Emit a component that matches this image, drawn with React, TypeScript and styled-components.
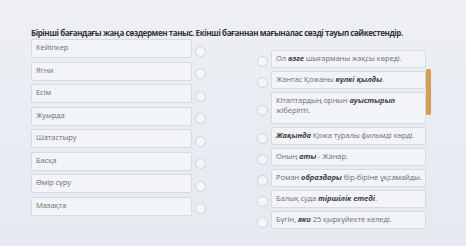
import React from "react";
import styled, { createGlobalStyle } from "styled-components";

const Global = createGlobalStyle`
  html, body { margin: 0; padding: 0; }
  body {
    width: 466px; height: 246px; overflow: hidden;
    background: linear-gradient(180deg, #eef0f5 0%, #e8ebf1 60%, #e6e9ef 100%);
    font-family: "Open Sans", "Noto Sans", sans-serif;
  }
`;

const Page = styled.div`
  position: relative;
  width: 466px;
  height: 246px;
  padding: 28px 0 0 31px;
  box-sizing: border-box;
`;

const Title = styled.div`
  font-size: 8px;
  font-weight: 700;
  color: #33363c;
  letter-spacing: -0.42px;
  line-height: 10px;
  white-space: nowrap;
`;

const Columns = styled.div`
  display: flex;
  align-items: flex-start;
  margin-top: 1px;
`;

const LeftCol = styled.div`
  display: flex;
  flex-direction: column;
  gap: 3.5px;
`;

const RightCol = styled.div`
  display: flex;
  flex-direction: column;
  gap: 3px;
  margin-top: 11px;
  margin-left: 51px;
`;

const Row = styled.div`
  display: flex;
  align-items: center;
  gap: 3px;
`;

const Box = styled.div<{ $w: number; $h?: number }>`
  width: ${(p) => p.$w}px;
  min-height: ${(p) => p.$h ?? 17}px;
  box-sizing: border-box;
  background: #f3f4f7;
  border: 1px solid #d7dae0;
  border-radius: 2px;
  padding: 2px 4px;
  font-size: 7.6px;
  letter-spacing: -0.1px;
  line-height: 10px;
  color: #6d6f74;
  white-space: nowrap;
  display: flex;
  align-items: flex-start;
`;

const Radio = styled.span`
  width: 9px;
  height: 9px;
  border: 1px solid #cfd2d8;
  border-radius: 50%;
  background: #f5f6f8;
  flex: none;
  margin-top: 5px;
`;

const Em = styled.b`
  font-weight: 700;
  font-style: italic;
  color: #3f4147;
`;

const Scroll = styled.div`
  position: absolute;
  left: 426px;
  top: 69px;
  width: 5px;
  height: 46px;
  background: #d39f52;
  border-radius: 2px;
  box-shadow: 0 0 1px #e8c48a;
`;

const left = ["Кейіпкер", "Ягни", "Есім", "Жуырда", "Шатастыру", "Басқа", "Өмір сүру", "Мазақта"];

const right: React.ReactNode[] = [
  <>Ол <Em>өзге</Em> шығарманы жақсы көреді.</>,
  <>Жантас Қожаны <Em>күлкі қылды</Em>.</>,
  <>Кітаптардың орнын <Em>ауыстырып</Em><br />жіберіпті.</>,
  <><Em>Жақында</Em> Қожа туралы фильмді көрді.</>,
  <>Оның <Em>аты</Em> - Жанар.</>,
  <>Роман <Em>образдары</Em> бір-біріне ұқсамайды.</>,
  <>Балық суда <Em>тіршілік етеді</Em>.</>,
  <>Бүгін, <Em>яки</Em> 25 қыркүйекте келеді.</>,
];

export default function App() {
  return (
    <>
      <Global />
      <Page>
        <Title>Бірінші бағандағы жаңа сөздермен таныс. Екінші бағаннан мағыналас сөзді тауып сәйкестендір.</Title>
        <Columns>
          <LeftCol>
            {left.map((t) => (
              <Row key={t}>
                <Box $w={161} $h={19}>{t}</Box>
                <Radio />
              </Row>
            ))}
          </LeftCol>
          <RightCol>
            {right.map((t, i) => (
              <Row key={i}>
                <Radio />
                <Box $w={155} $h={i === 2 ? 32 : 18}>
                  <span>{t}</span>
                </Box>
              </Row>
            ))}
          </RightCol>
        </Columns>
        <Scroll />
      </Page>
    </>
  );
}
